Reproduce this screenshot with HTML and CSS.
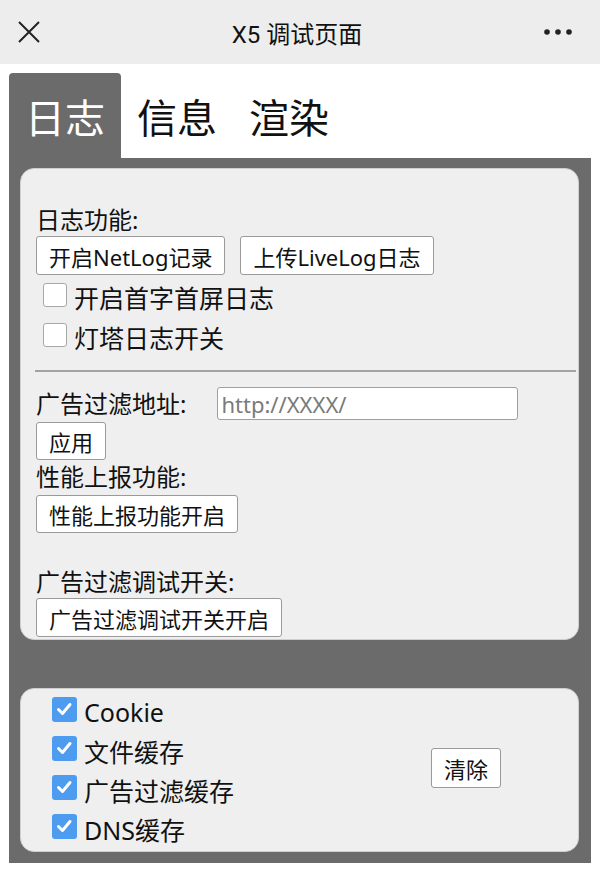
FILE: index.html
```html
<!DOCTYPE html>
<html lang="zh-CN">
<head>
    <meta charset="UTF-8">
    <meta name="viewport" content="width=device-width, initial-scale=1.0">
    <title>X5 调试页面</title>
    <link rel="stylesheet" href="styles.css">
</head>
<body>
<div class="topbar">
    <svg class="close" width="22" height="22" viewBox="0 0 22 22">
        <path d="M1 1 L21 21 M21 1 L1 21" stroke="#222" stroke-width="2" fill="none"/>
    </svg>
    <div class="title">X5 调试页面</div>
    <svg class="more" width="28" height="6" viewBox="0 0 28 6">
        <circle cx="3" cy="3" r="2.8" fill="#222"/>
        <circle cx="14" cy="3" r="2.8" fill="#222"/>
        <circle cx="25" cy="3" r="2.8" fill="#222"/>
    </svg>
</div>

<div class="tabs">
    <div class="tab active">日志</div>
    <div class="tab">信息</div>
    <div class="tab">渲染</div>
</div>

<div class="panel">
    <div class="card log-card">
        <div class="label">日志功能:</div>
        <div class="btn-row">
            <button class="btn">开启NetLog记录</button>
            <button class="btn">上传LiveLog日志</button>
        </div>
        <label class="check">
            <span class="box"></span>
            <span class="txt">开启首字首屏日志</span>
        </label>
        <label class="check">
            <span class="box"></span>
            <span class="txt">灯塔日志开关</span>
        </label>

        <div class="divider"></div>

        <div class="addr-row">
            <span class="label">广告过滤地址:</span>
            <input type="text" class="addr" placeholder="http://XXXX/">
        </div>
        <div class="apply"><button class="btn short">应用</button></div>

        <div class="label perf-label">性能上报功能:</div>
        <div class="perf"><button class="btn short">性能上报功能开启</button></div>

        <div class="label ad-label">广告过滤调试开关:</div>
        <div class="ad"><button class="btn">广告过滤调试开关开启</button></div>
    </div>

    <div class="card cache-card">
        <div class="cache-list">
            <label class="check on">
                <span class="box"><svg width="25" height="25" viewBox="0 0 25 25"><path d="M6.5 12.5 L10.5 16.5 L18 7.5" stroke="#fff" stroke-width="3" fill="none" stroke-linecap="round" stroke-linejoin="round"/></svg></span>
                <span class="txt">Cookie</span>
            </label>
            <label class="check on">
                <span class="box"><svg width="25" height="25" viewBox="0 0 25 25"><path d="M6.5 12.5 L10.5 16.5 L18 7.5" stroke="#fff" stroke-width="3" fill="none" stroke-linecap="round" stroke-linejoin="round"/></svg></span>
                <span class="txt">文件缓存</span>
            </label>
            <label class="check on">
                <span class="box"><svg width="25" height="25" viewBox="0 0 25 25"><path d="M6.5 12.5 L10.5 16.5 L18 7.5" stroke="#fff" stroke-width="3" fill="none" stroke-linecap="round" stroke-linejoin="round"/></svg></span>
                <span class="txt">广告过滤缓存</span>
            </label>
            <label class="check on">
                <span class="box"><svg width="25" height="25" viewBox="0 0 25 25"><path d="M6.5 12.5 L10.5 16.5 L18 7.5" stroke="#fff" stroke-width="3" fill="none" stroke-linecap="round" stroke-linejoin="round"/></svg></span>
                <span class="txt">DNS缓存</span>
            </label>
        </div>
        <button class="btn clear">清除</button>
    </div>
</div>
</body>
</html>
```

FILE: styles.css
```css
body {
    margin: 0;
    background: #fff;
    color: #111;
    font-family: "Noto Sans", "Noto Sans CJK SC", sans-serif;
}

/* barra superior */
.topbar {
    height: 64px;
    background: #ededed;
    display: grid;
    grid-template-columns: 1fr auto 1fr;
    align-items: center;
}
.close {
    margin-left: 18px;
}
.title {
    font-family: Roboto, "Noto Sans CJK SC", sans-serif;
    font-size: 24px;
    margin-left: -6px;
}
.more {
    justify-self: end;
    margin-right: 28px;
}

/* pestañas */
.tabs {
    display: flex;
    margin: 9px 9px 0;
}
.tab {
    height: 85px;
    box-sizing: border-box;
    padding: 4px 16px 0;
    line-height: 81px;
    font-size: 40px;
    color: #111;
}
.tab.active {
    background: #6b6b6b;
    color: #fff;
    border-radius: 4px 4px 0 0;
}

.panel {
    margin: 0 9px;
    background: #6b6b6b;
    padding: 10px 12px 11px 11px;
}
.card {
    background: #efefef;
    border: 1px solid #cfcfcf;
    border-radius: 14px;
}
.log-card {
    padding: 37px 3px 2px 15px;
}

.label {
    font-size: 24px;
    line-height: 28px;
    height: 28px;
}
.btn {
    font-family: inherit;
    font-size: 22px;
    height: 39px;
    padding: 0 12px;
    background: #fff;
    color: #111;
    border: 1px solid #9a9a9a;
    border-radius: 3px;
}
.btn.short {
    height: 38px;
}
.btn-row {
    display: flex;
    gap: 15px;
    margin-top: 2px;
}

.check {
    display: flex;
    align-items: center;
    height: 40px;
    gap: 7px;
    padding-left: 7px;
    font-size: 25px;
}
.check .txt {
    margin-top: 4px;
}
.box {
    width: 24px;
    height: 24px;
    box-sizing: border-box;
    background: #fff;
    border: 1px solid #a8a8a8;
    border-radius: 3px;
}

.divider {
    margin: 15px -1px 0 -1px;
    border-top: 2px solid #a3a3a3;
}

.addr-row {
    display: flex;
    align-items: center;
    height: 33px;
    margin-top: 15px;
}
.addr {
    width: 301px;
    height: 33px;
    box-sizing: border-box;
    margin-left: 31px;
    padding: 0 3px;
    border: 1px solid #a0a0a0;
    border-radius: 3px;
    background: #fff;
    font-family: "Noto Sans", sans-serif;
    font-size: 22px;
}
.addr::placeholder {
    color: #7a7a7a;
}
.apply {
    margin-top: 2px;
}
.perf-label {
    margin-top: 3px;
}
.perf {
    margin-top: 4px;
}
.ad-label {
    margin-top: 35px;
}
.ad {
    margin-top: 2px;
}

/* tarjeta de caché */
.cache-card {
    margin-top: 48px;
    padding: 1px 0 5px 31px;
    display: flex;
    align-items: center;
    justify-content: space-between;
}
.cache-card .check {
    height: 39px;
    padding-left: 0;
}
.check.on .box {
    width: 25px;
    height: 25px;
    background: #4d9cf0;
    border: none;
}
.check.on .box svg {
    display: block;
}
.clear {
    height: 40px;
    margin-right: 77px;
}
```
